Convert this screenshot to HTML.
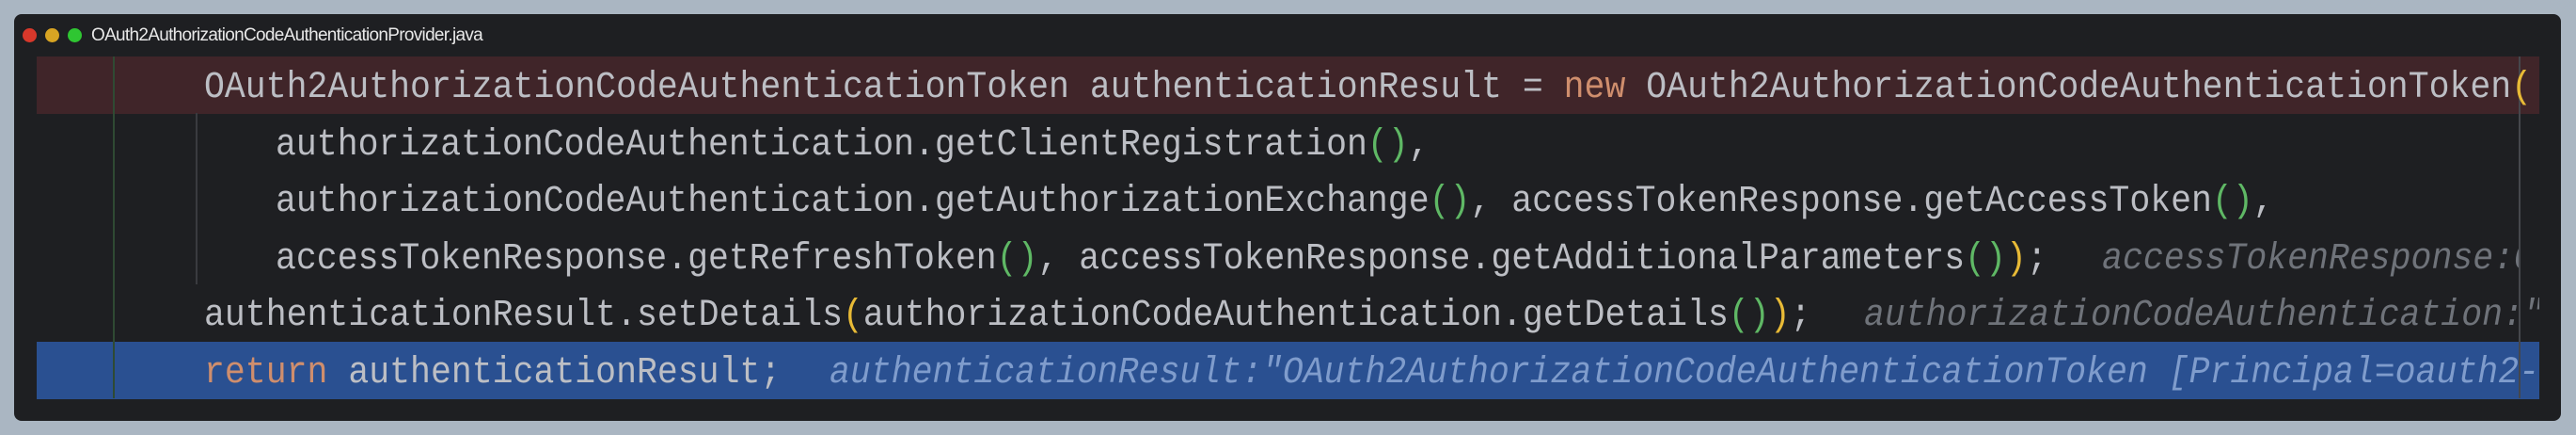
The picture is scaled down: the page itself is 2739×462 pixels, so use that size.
<!DOCTYPE html>
<html><head><meta charset="utf-8"><style>
html,body{margin:0;padding:0;width:2739px;height:462px;background:#aab6c2;overflow:hidden}
.win{position:absolute;left:15px;top:15px;width:2708px;height:432px;background:#1e1f22;border-radius:8px}
.dot{position:absolute;top:30px;width:15px;height:15px;border-radius:50%}
.title{position:absolute;left:97px;top:27px;font:19px "Liberation Sans",sans-serif;color:#e8e8e8;letter-spacing:-0.7px;white-space:nowrap}
.band{position:absolute;left:39px;width:2661px;height:60.5px}
.ln{position:absolute;height:60.5px;line-height:60.5px;font:36.5px "Liberation Mono",monospace;color:#bcbec4;white-space:pre;margin-top:13px;transform:scaleY(1.1);transform-origin:left center}
.k{color:#cf8e6d}.g{color:#5fb865}.y{color:#e8ba36}
.h{font-style:italic;color:#6f737a}
.hb{font-style:italic;color:#7f9ccc}
.vl{position:absolute;width:2px}
</style></head><body>
<div class="win"></div>
<div class="dot" style="left:24px;background:#d8382b"></div>
<div class="dot" style="left:48px;background:#d8a423"></div>
<div class="dot" style="left:72px;background:#2fc632"></div>
<div class="title">OAuth2AuthorizationCodeAuthenticationProvider.java</div>

<div class="band" style="top:60px;background:#402529"></div>
<div class="band" style="top:363px;background:#2a5091"></div>
<div class="vl" style="left:120px;top:60px;height:363px;background:#2f4a33"></div>
<div class="vl" style="left:208px;top:120px;height:182px;background:#3a3b3f"></div>
<div class="vl" style="left:2678px;top:60px;height:363px;background:#45474c"></div>

<div class="ln" style="left:217px;top:60px">OAuth2AuthorizationCodeAuthenticationToken authenticationResult = <span class="k">new</span> OAuth2AuthorizationCodeAuthenticationToken<span class="y">(</span></div>
<div class="ln" style="left:293px;top:120.5px">authorizationCodeAuthentication.getClientRegistration<span class="g">()</span>,</div>
<div class="ln" style="left:293px;top:181px">authorizationCodeAuthentication.getAuthorizationExchange<span class="g">()</span>, accessTokenResponse.getAccessToken<span class="g">()</span>,</div>
<div class="ln" style="left:293px;top:241.5px">accessTokenResponse.getRefreshToken<span class="g">()</span>, accessTokenResponse.getAdditionalParameters<span class="g">()</span><span class="y">)</span>;</div>
<div class="ln h" style="left:2235px;top:241.5px;width:443px;overflow:hidden">accessTokenResponse:OAuth2</div>
<div class="ln" style="left:217px;top:302px">authenticationResult.setDetails<span class="y">(</span>authorizationCodeAuthentication.getDetails<span class="g">()</span><span class="y">)</span>;</div>
<div class="ln h" style="left:1982px;top:302px;width:718px;overflow:hidden">authorizationCodeAuthentication:"oauth2</div>
<div class="ln" style="left:217px;top:363px"><span class="k">return</span> authenticationResult;</div>
<div class="ln hb" style="left:882px;top:363px;width:1818px;overflow:hidden">authenticationResult:"OAuth2AuthorizationCodeAuthenticationToken [Principal=oauth2-user]</div>
</body></html>
